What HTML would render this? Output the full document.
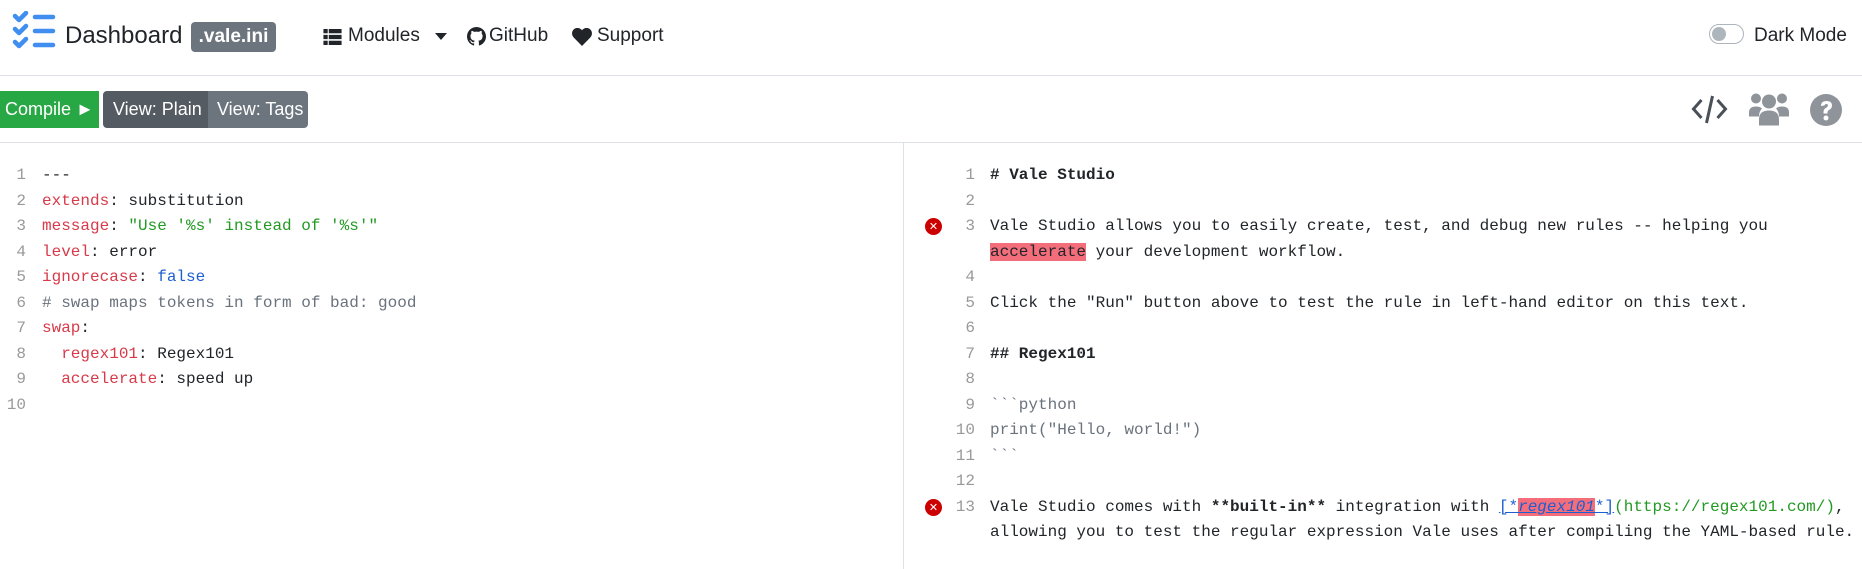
<!DOCTYPE html>
<html><head><meta charset="utf-8"><style>
*{margin:0;padding:0;box-sizing:border-box}
html,body{width:1862px;height:569px;overflow:hidden;background:#fff}
body{font-family:"Liberation Sans",sans-serif;color:#212529;position:relative}
.abs{position:absolute;white-space:nowrap}
.nav{position:absolute;left:0;top:0;width:1862px;height:76px;border-bottom:1px solid #dee2e6}
.tb{position:absolute;left:0;top:76px;width:1862px;height:67px;border-bottom:1px solid #dee2e6}
.btn{position:absolute;top:15px;height:37px;color:#fff;font-size:18px;line-height:37px;padding:0 0 0 5px;white-space:nowrap}
.pane{position:absolute;top:163px;font-family:"Liberation Mono",monospace;font-size:16px;line-height:25.5px}
.row{height:25.5px;white-space:pre;position:relative}
.n{position:absolute;color:#999;text-align:right}
.k{color:#d73a49}.s{color:#229922}.b{color:#1e5fd0}.c{color:#6a737d}.g{color:#6a737d}
.hl{background:#f46d7b}
.err{position:absolute;width:17px;height:17px;border-radius:50%;background:#c00;color:#fff;font-size:11px;line-height:17px;text-align:center;font-family:"DejaVu Sans",sans-serif;top:4px;left:-65px}
.pl .n{left:-42px;width:26px}
.pr .n{left:-50px;width:35px}
.ni{font-size:19px;top:25px}
</style></head><body>
<div class="nav">
<svg class="abs" style="left:12px;top:11px" width="45" height="42" viewBox="0 0 45 42">
<g fill="none" stroke="#3f8ef0" stroke-width="4.5" stroke-linecap="round" stroke-linejoin="round">
<path d="M3 5l4 4 7-7"/><path d="M3 18l4 4 7-7"/><path d="M3 31l4 4 7-7"/>
<path d="M23 6h18M23 20h18M23 34h18"/></g></svg>
<div class="abs" style="left:65px;top:22px;font-size:24px;color:#212529">Dashboard</div>
<div class="abs" style="left:191px;top:22px;width:85px;height:30px;background:#6c757d;border-radius:4px;color:#fff;font-weight:bold;font-size:19px;line-height:30px;text-align:center">.vale.ini</div>
<svg class="abs" style="left:323px;top:29px" width="19" height="16" viewBox="0 0 17 15"><g fill="#212529"><rect x="0" y="0" width="4" height="4"/><rect x="5" y="0" width="12" height="4"/><rect x="0" y="5.5" width="4" height="4"/><rect x="5" y="5.5" width="12" height="4"/><rect x="0" y="11" width="4" height="4"/><rect x="5" y="11" width="12" height="4"/></g></svg>
<div class="abs ni" style="left:348px">Modules</div>
<svg class="abs" style="left:435px;top:33px" width="12" height="7"><path d="M0 0h12L6 7z" fill="#212529"/></svg>
<svg class="abs" style="left:467px;top:27px" width="19" height="19" viewBox="0 0 16 16"><path fill="#212529" d="M8 0C3.58 0 0 3.58 0 8c0 3.54 2.290 6.53 5.470 7.590.4.07.55-.17.55-.38 0-.19-.01-.82-.01-1.49-2.01.37-2.53-.49-2.690-.94-.09-.23-.48-.94-.82-1.130-.28-.15-.68-.52-.01-.53.63-.01 1.08.58 1.230.82.72 1.21 1.87.87 2.330.66.07-.52.28-.87.51-1.07-1.78-.2-3.64-.89-3.64-3.95 0-.87.31-1.59.82-2.15-.08-.2-.36-1.020.08-2.12 0 0 .67-.21 2.2.82.64-.18 1.32-.27 2-.27.68 0 1.36.09 2 .27 1.53-1.04 2.2-.82 2.2-.82.44 1.1.16 1.92.08 2.12.51.56.82 1.27.82 2.15 0 3.07-1.87 3.75-3.65 3.95.29.25.54.73.54 1.48 0 1.07-.01 1.93-.01 2.2 0 .21.15.46.55.38A8.013 8.013 0 0016 8c0-4.42-3.58-8-8-8z"/></svg>
<div class="abs ni" style="left:489px">GitHub</div>
<svg class="abs" style="left:572px;top:28px" width="20" height="18" viewBox="0 0 20 18"><path fill="#212529" d="M10 18L1.8 9.6C-.6 7.1-.5 3.3 1.9 1.2 4.2-.7 7.6-.3 9.6 1.8L10 2.2l.4-.4c2-2.1 5.4-2.5 7.7-.6 2.4 2.1 2.5 5.9.1 8.4z"/></svg>
<div class="abs ni" style="left:597px">Support</div>
<div class="abs" style="left:1709px;top:24px;width:35px;height:20px;border:1px solid #adb5bd;border-radius:10px"><div style="position:absolute;left:2px;top:2px;width:14px;height:14px;border-radius:50%;background:#adb5bd"></div></div>
<div class="abs ni" style="left:1754px">Dark Mode</div>
</div>
<div class="tb">
<div class="btn" style="left:0;width:99px;background:#28a745">Compile ►</div>
<div class="btn" style="left:103px;width:105px;background:#545b62;border-radius:4px 0 0 4px;padding-left:10px">View: Plain</div>
<div class="btn" style="left:208px;width:100px;background:#6c757d;border-radius:0 4px 4px 0;padding-left:9px">View: Tags</div>
<svg class="abs" style="left:1691px;top:18px" width="37" height="30" viewBox="0 0 36 30"><g fill="none" stroke="#495057" stroke-width="3"><path d="M10 6L2 15l8 9M26 6l8 9-8 9M21 2l-6 27"/></g></svg>
<svg class="abs" style="left:1749px;top:15px" width="40" height="36" viewBox="0 0 40 33"><g fill="#8e949a"><circle cx="7" cy="6" r="5"/><circle cx="33" cy="6" r="5"/><circle cx="20" cy="9" r="7"/><path d="M0 20q0-6 7-6 4 0 6 2-3 3-3 8H0z"/><path d="M40 20q0-6-7-6-4 0-6 2 3 3 3 8h10z"/><path d="M10 33v-6q0-9 10-9t10 9v6z"/></g></svg>
<svg class="abs" style="left:1810px;top:18px" width="32" height="32" viewBox="0 0 32 32"><circle cx="16" cy="16" r="16" fill="#8e949a"/><path d="M11 12q0-5 5.5-5t5.5 4.5q0 3-3 4.5-1.5.8-1.5 2.5v1h-4v-1.5q0-3 3-4.5 1.5-.8 1.5-2t-1.5-1.5-2 1.5z" fill="#fff"/><circle cx="16" cy="24" r="2.5" fill="#fff"/></svg>
</div>
<div class="abs" style="left:903px;top:143px;width:1px;height:426px;background:#dee2e6"></div>

<div class="pane pl" style="left:42px">
<div class="row"><span class="n">1</span>---</div>
<div class="row"><span class="n">2</span><span class="k">extends</span>: substitution</div>
<div class="row"><span class="n">3</span><span class="k">message</span>: <span class="s">"Use '%s' instead of '%s'"</span></div>
<div class="row"><span class="n">4</span><span class="k">level</span>: error</div>
<div class="row"><span class="n">5</span><span class="k">ignorecase</span>: <span class="b">false</span></div>
<div class="row"><span class="n">6</span><span class="c"># swap maps tokens in form of bad: good</span></div>
<div class="row"><span class="n">7</span><span class="k">swap</span>:</div>
<div class="row"><span class="n">8</span>  <span class="k">regex101</span>: Regex101</div>
<div class="row"><span class="n">9</span>  <span class="k">accelerate</span>: speed up</div>
<div class="row"><span class="n">10</span></div>
</div>

<div class="pane pr" style="left:990px">
<div class="row"><span class="n">1</span><b># Vale Studio</b></div>
<div class="row"><span class="n">2</span></div>
<div class="row"><span class="err">✕</span><span class="n">3</span>Vale Studio allows you to easily create, test, and debug new rules -- helping you</div>
<div class="row"><span class="hl">accelerate</span> your development workflow.</div>
<div class="row"><span class="n">4</span></div>
<div class="row"><span class="n">5</span>Click the "Run" button above to test the rule in left-hand editor on this text.</div>
<div class="row"><span class="n">6</span></div>
<div class="row"><span class="n">7</span><b>## Regex101</b></div>
<div class="row"><span class="n">8</span></div>
<div class="row"><span class="n">9</span><span class="g">&#96;&#96;&#96;python</span></div>
<div class="row"><span class="n">10</span><span class="g">print("Hello, world!")</span></div>
<div class="row"><span class="n">11</span><span class="g">&#96;&#96;&#96;</span></div>
<div class="row"><span class="n">12</span></div>
<div class="row"><span class="err">✕</span><span class="n">13</span>Vale Studio comes with <b>**built-in**</b> integration with <span style="color:#1e5fd0;text-decoration:underline">[*<i class="hl">regex101</i>*]</span><span class="s">(https://regex101.com/)</span>,</div>
<div class="row">allowing you to test the regular expression Vale uses after compiling the YAML-based rule.</div>
</div>
</body></html>
